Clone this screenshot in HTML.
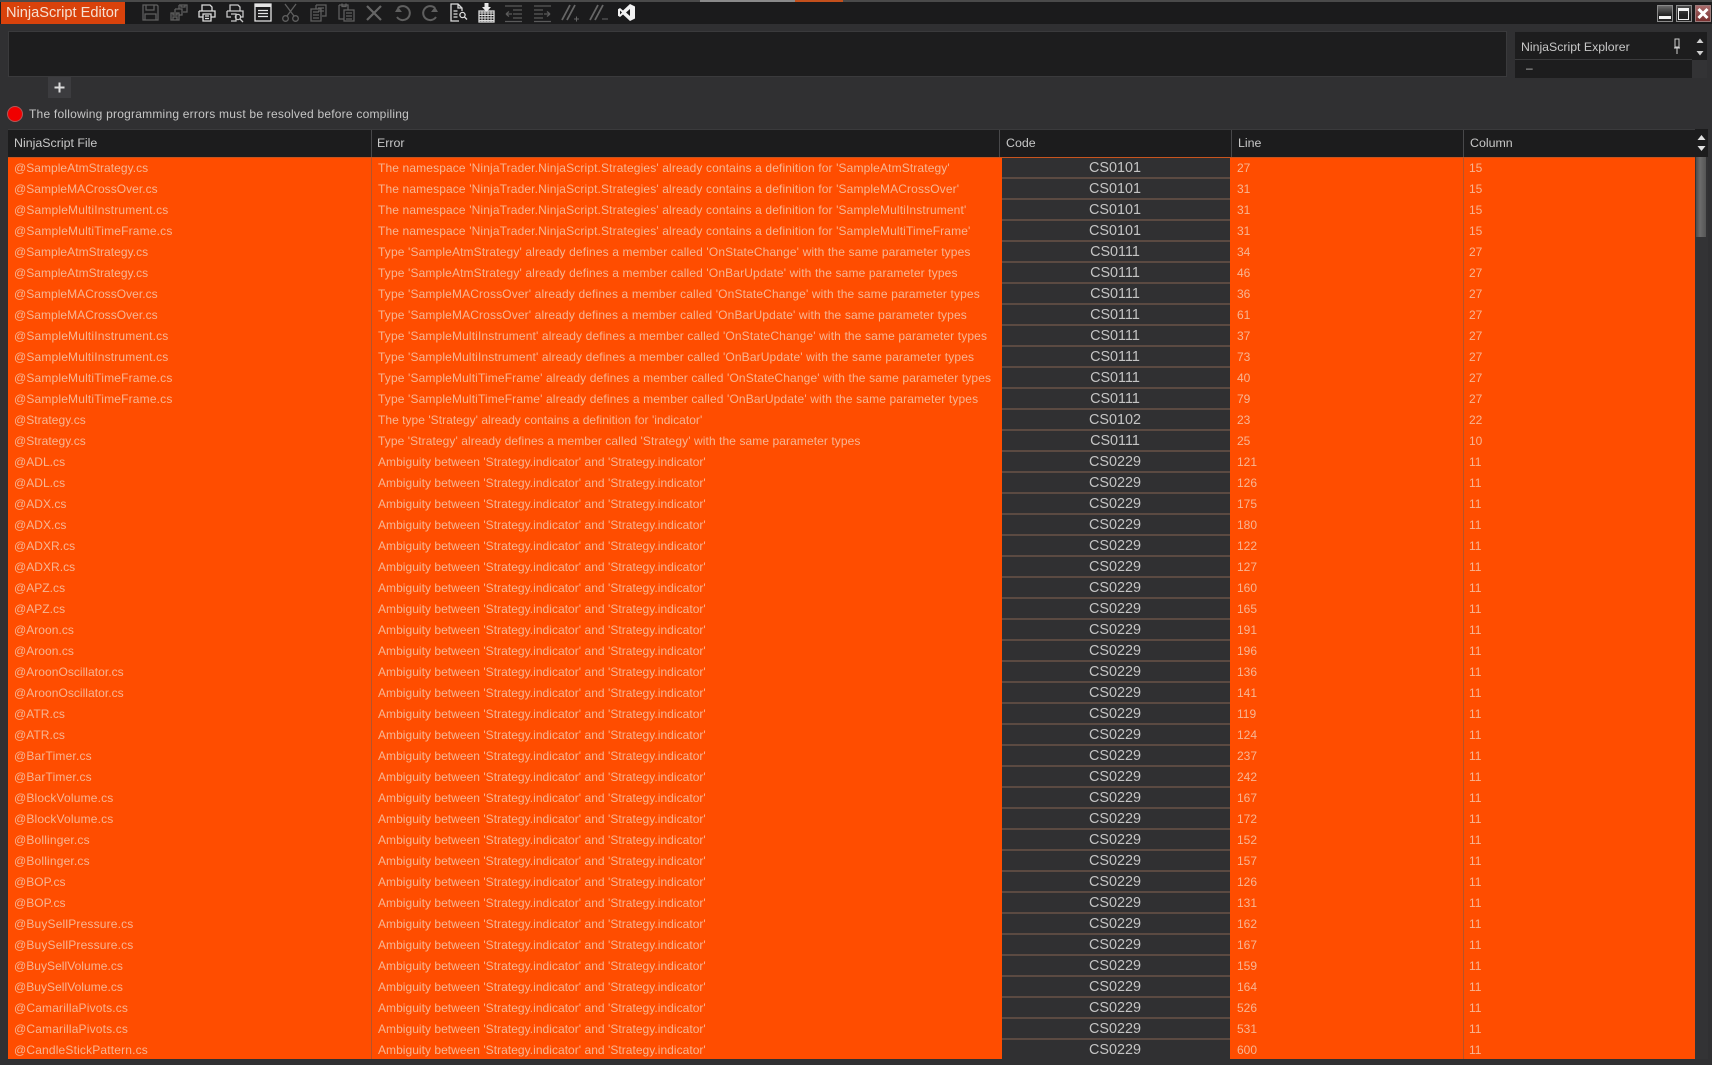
<!DOCTYPE html>
<html>
<head>
<meta charset="utf-8">
<title>NinjaScript Editor</title>
<style>
html,body{margin:0;padding:0;background:#303032;}
body{width:1712px;height:1065px;position:relative;overflow:hidden;font-family:"Liberation Sans",sans-serif;font-size:12px;color:#c8c8c8;}
.abs{position:absolute;}
#topline{left:0;top:0;width:1712px;height:2px;background:#4a4a4a;}
#bar{left:0;top:2px;width:1712px;height:22px;background:#1b1b1c;}
#title{left:1px;top:2px;width:124px;height:22px;background:#d9420b;color:#f6e0d2;font-size:14.6px;line-height:22px;padding-left:5px;box-sizing:border-box;white-space:nowrap;}
#editor{left:8px;top:31px;width:1499px;height:46px;background:#1d1d1e;box-shadow:inset 0 0 0 1px #3a3a3c;}
#plus{left:48px;top:77px;width:23px;height:21px;background:#3c3c3f;color:#d8d8d8;}
#dot{left:7px;top:106px;width:16px;height:16px;border-radius:50%;background:#f00000;box-sizing:border-box;border:1px solid #b05858;}
#msg{left:29px;top:107px;line-height:15px;letter-spacing:.22px;color:#c6c6c6;white-space:nowrap;}
#exp{left:1515px;top:32px;width:177px;height:46px;background:#1d1d1e;}
#exp .hd{position:absolute;left:0;top:0;width:177px;height:28px;border-bottom:1px solid #3a3a3c;box-sizing:border-box;line-height:30px;padding-left:6px;color:#c8c8c8;font-size:12.3px;}
#exp .t{position:absolute;left:11px;top:28px;color:#bbb;line-height:16px;}
#exp .sb{position:absolute;left:177px;top:28px;width:15px;height:18px;background:#333335;}
#exps{left:1692px;top:32px;width:15px;height:28px;background:#1d1d1e;}
#head{left:8px;top:129px;width:1700px;height:28px;background:#1c1c1d;line-height:28px;color:#c8c8c8;border-top:1px solid #3a3a3c;box-sizing:border-box;font-size:12.4px;}
#head span{position:absolute;top:-1px;white-space:nowrap;}
#head i{position:absolute;top:0;width:1px;height:28px;background:#48484a;}
#grid{left:8px;top:157px;width:1687px;height:902px;background:#ff4d00;overflow:hidden;border-top:1px solid #c8541e;box-sizing:border-box;}
.d{position:absolute;top:0;width:1px;height:902px;background:#b5542a;}
.r{position:relative;height:21px;white-space:nowrap;color:#f7b592;line-height:21px;}
.r b{font-weight:normal;position:absolute;top:0;}
.f{left:6px;letter-spacing:.04px;}
.f.s{letter-spacing:.17px;}
.e{left:370px;letter-spacing:.035px;}
.e.n{letter-spacing:.13px;}
.e.t{letter-spacing:.135px;}
.c{left:994px;width:226px;padding-right:2px;height:19px;background:#303032;border-bottom:2px solid #5b4a42;color:#c4c4c4;font-size:14.4px;text-align:center;line-height:21px;}
.l{left:1229px;}
.k{left:1461px;}
#sbar{left:1695px;top:157px;width:13px;height:902px;background:#333335;}
#thumb{left:1696px;top:157px;width:10px;height:80px;background:linear-gradient(90deg,#4c4c4c,#6c6c6c 40%,#555);}
#sb2{left:1695px;top:129px;width:13px;height:28px;background:#1c1c1d;}
svg{position:absolute;overflow:visible;}
</style>
</head>
<body>
<div class="abs" id="topline"></div>
<div class="abs" id="bar"></div>
<div class="abs" style="left:700px;top:0;width:140px;height:2px;background:#8a8a8a"></div>
<div class="abs" style="left:795px;top:0;width:48px;height:2px;background:#c4501c"></div>
<div class="abs" id="title">NinjaScript Editor</div>

<svg style="left:-1px;top:-1px" width="700" height="26" fill="none" stroke-width="1.3">
<!-- save -->
<g stroke="#5f5f5f" transform="translate(143,5)"><path d="M1 1H15L16 2V16H1ZM4 1V6H12V1M3 16V10H14V16"/></g>
<!-- save all -->
<g stroke="#5f5f5f" transform="translate(171,5)"><path d="M9 1H17V8H13M9 1V5M11 1V3H15V1M5 5H12V11H9M5 5V8M1 9H9V16H1ZM3 9V11H7V9M3 16V13H7V16"/></g>
<!-- print -->
<g stroke="#dcdcdc" transform="translate(199,5)"><path d="M4 7V1H12L14 3V7M1 7H17V13H13M5 13H1V7M5 10H13V17H5ZM7 12H11M7 14.5H11"/></g>
<!-- print preview -->
<g stroke="#c8c8c8" transform="translate(227,5)"><path d="M4 7V1H12L14 3V7M1 7H17V13H14M5 13H1V7M5 10H10V17H5"/><circle cx="12" cy="13" r="2.6"/><path d="M14 15L17 18"/></g>
<!-- document list -->
<g transform="translate(255,4)"><path d="M1 1H17V18H1Z" stroke="#e4e4e4"/><rect x="1" y="1" width="16" height="3" fill="#e4e4e4"/><path d="M4 7.5H14M4 10.5H14M4 13.5H14" stroke="#e4e4e4"/></g>
<!-- cut -->
<g stroke="#5f5f5f" transform="translate(283,5)"><path d="M3 0L12 12M14 0L5 12"/><circle cx="3.5" cy="14.5" r="2.8"/><circle cx="13.5" cy="14.5" r="2.8"/></g>
<!-- copy -->
<g stroke="#5f5f5f" transform="translate(311,5)"><path d="M6 1H16V12H12M6 1V5M8 4H14M8 7H14M1 5H11V17H1ZM3 8H9M3 11H9M3 14H9"/></g>
<!-- paste -->
<g stroke="#5f5f5f" transform="translate(339,4)"><path d="M1 2H10V7M1 2V16H6M4 0.5V3.5H8V0.5M6 7H16V18H6ZM8 10H14M8 13H14M8 16H14"/></g>
<!-- delete -->
<g stroke="#666" stroke-width="2.2" transform="translate(367,6)"><path d="M1 1L15 15M15 1L1 15"/></g>
<!-- undo -->
<g stroke="#5f5f5f" stroke-width="2" transform="translate(395,5)"><path d="M4 4A7 7 0 1 1 3 13"/><path d="M1 8H8L4 3Z" fill="#5f5f5f" stroke="none"/></g>
<!-- redo -->
<g stroke="#5f5f5f" stroke-width="2" transform="translate(423,5)"><path d="M13 4A7 7 0 1 0 14 13"/><path d="M16 8H9L13 3Z" fill="#5f5f5f" stroke="none"/></g>
<!-- find doc -->
<g stroke="#dcdcdc" transform="translate(451,5)"><path d="M9 17H1V0H8L12 4V7M8 0V4H12M3.5 7H7.5M3.5 10H7.5M3.5 13H7.5"/><circle cx="12.5" cy="11" r="2.6"/><path d="M14.5 13L17 15.5"/></g>
<!-- insert -->
<g transform="translate(479,4)"><rect x="1" y="8" width="15" height="11" fill="none" stroke="#dcdcdc"/><path d="M1 10H16M1 12.5H16M1 15H16M1 17.5H16M4 8V19M7 8V19M10 8V19M13 8V19" stroke="#dcdcdc" stroke-width="1"/><path d="M6.5 0H10.5V4H13L8.5 9L4 4H6.5Z" fill="#e8e8e8"/></g>
<!-- outdent -->
<g stroke="#5a5a5a" transform="translate(506,6)"><path d="M0 1H17M8 5H17M8 9H17M8 13H17M0 16.5H17M1 9H7M1 9L4 6.5M1 9L4 11.5"/></g>
<!-- indent -->
<g stroke="#5a5a5a" transform="translate(535,6)"><path d="M0 1H17M0 5H9M0 9H9M0 13H9M0 16.5H17M10 9H16M16 9L13 6.5M16 9L13 11.5"/></g>
<!-- comment -->
<g stroke="#666" transform="translate(563,5)"><path d="M0 16L8 1M5 16L13 1" stroke-width="1.8"/><path d="M12 15H17M14.5 12.5V17.5" stroke-width="1"/></g>
<!-- uncomment -->
<g stroke="#666" transform="translate(591,5)"><path d="M0 16L8 1M5 16L13 1" stroke-width="1.8"/><path d="M12 15H18" stroke-width="1"/></g>
<!-- VS -->
<g transform="translate(619,4)"><path d="M12 1L17 3.5V15.5L12 18L5 11.5L2 14L0 12.8V6.2L2 5L5 7.5ZM12 6L8 9.5L12 13ZM2 7.5V11.5L4 9.5Z" fill="#f2f2f2" fill-rule="evenodd"/></g>
</svg>

<!-- window buttons -->
<div class="abs" style="left:1657px;top:5px;width:14px;height:15px;border:1px solid #8a8a8a;background:linear-gradient(#6a6a6a,#222 60%)"><div style="position:absolute;left:1px;top:10px;width:12px;height:3px;background:#f2f2f2"></div></div>
<div class="abs" style="left:1676px;top:5px;width:14px;height:15px;border:1px solid #8a8a8a;background:linear-gradient(#4a4a4a,#222 60%)"><div style="position:absolute;left:1px;top:2px;width:9px;height:8px;border:1.5px solid #f2f2f2;border-top-width:3px"></div></div>
<div class="abs" style="left:1695px;top:5px;width:14px;height:15px;border:1px solid #9a7a7a;background:linear-gradient(#a86a6a,#7a3030)"><svg width="14" height="15" style="left:0;top:0"><path d="M2.500 3L11.500 12M11.500 3L2.500 12" stroke="#fff" stroke-width="3"/></svg></div>

<div class="abs" id="editor"></div>
<div class="abs" id="plus"><svg width="23" height="21" style="left:0;top:0"><path d="M11.5 5.5V15.5M6.5 10.5H16.5" stroke="#dcdcdc" stroke-width="2"/></svg></div>
<div class="abs" id="dot"></div>
<div class="abs" id="msg">The following programming errors must be resolved before compiling</div>

<div class="abs" id="exp">
  <div class="hd">NinjaScript Explorer</div>
  <div class="t">&ndash;</div>
  <div class="sb"></div>
  <svg width="10" height="18" style="left:157px;top:6px"><path d="M3 1H7V9H3ZM2 10H8M5 10V16" fill="none" stroke="#cfcfcf" stroke-width="1"/></svg>
</div>
<div class="abs" id="exps"><svg width="15" height="28" style="left:0;top:0"><path d="M4.500 11L8 6.500L11.500 11ZM4.500 19H11.500L8 23.500Z" fill="#cfcfcf"/></svg></div>

<div class="abs" id="head">
  <span style="left:6px">NinjaScript File</span>
  <i style="left:363px"></i>
  <span style="left:369px">Error</span>
  <i style="left:991px"></i>
  <span style="left:998px">Code</span>
  <i style="left:1223px"></i>
  <span style="left:1230px">Line</span>
  <i style="left:1455px"></i>
  <span style="left:1462px">Column</span>
</div>
<div class="abs" id="sb2"><svg width="13" height="28" style="left:0;top:0"><path d="M2.500 11L6.500 6L10.500 11ZM2.500 17H10.500L6.500 22Z" fill="#e0e0e0"/></svg></div>

<div class="abs" id="grid">
<i class="d" style="left:363px"></i><i class="d" style="left:1455px"></i>
<div class="r"><b class="f">@SampleAtmStrategy.cs</b><b class="e n">The namespace 'NinjaTrader.NinjaScript.Strategies' already contains a definition for 'SampleAtmStrategy'</b><b class="c">CS0101</b><b class="l">27</b><b class="k">15</b></div>
<div class="r"><b class="f">@SampleMACrossOver.cs</b><b class="e n">The namespace 'NinjaTrader.NinjaScript.Strategies' already contains a definition for 'SampleMACrossOver'</b><b class="c">CS0101</b><b class="l">31</b><b class="k">15</b></div>
<div class="r"><b class="f s">@SampleMultiInstrument.cs</b><b class="e n">The namespace 'NinjaTrader.NinjaScript.Strategies' already contains a definition for 'SampleMultiInstrument'</b><b class="c">CS0101</b><b class="l">31</b><b class="k">15</b></div>
<div class="r"><b class="f s">@SampleMultiTimeFrame.cs</b><b class="e n">The namespace 'NinjaTrader.NinjaScript.Strategies' already contains a definition for 'SampleMultiTimeFrame'</b><b class="c">CS0101</b><b class="l">31</b><b class="k">15</b></div>
<div class="r"><b class="f">@SampleAtmStrategy.cs</b><b class="e t">Type 'SampleAtmStrategy' already defines a member called 'OnStateChange' with the same parameter types</b><b class="c">CS0111</b><b class="l">34</b><b class="k">27</b></div>
<div class="r"><b class="f">@SampleAtmStrategy.cs</b><b class="e t">Type 'SampleAtmStrategy' already defines a member called 'OnBarUpdate' with the same parameter types</b><b class="c">CS0111</b><b class="l">46</b><b class="k">27</b></div>
<div class="r"><b class="f">@SampleMACrossOver.cs</b><b class="e t">Type 'SampleMACrossOver' already defines a member called 'OnStateChange' with the same parameter types</b><b class="c">CS0111</b><b class="l">36</b><b class="k">27</b></div>
<div class="r"><b class="f">@SampleMACrossOver.cs</b><b class="e t">Type 'SampleMACrossOver' already defines a member called 'OnBarUpdate' with the same parameter types</b><b class="c">CS0111</b><b class="l">61</b><b class="k">27</b></div>
<div class="r"><b class="f s">@SampleMultiInstrument.cs</b><b class="e t">Type 'SampleMultiInstrument' already defines a member called 'OnStateChange' with the same parameter types</b><b class="c">CS0111</b><b class="l">37</b><b class="k">27</b></div>
<div class="r"><b class="f s">@SampleMultiInstrument.cs</b><b class="e t">Type 'SampleMultiInstrument' already defines a member called 'OnBarUpdate' with the same parameter types</b><b class="c">CS0111</b><b class="l">73</b><b class="k">27</b></div>
<div class="r"><b class="f s">@SampleMultiTimeFrame.cs</b><b class="e t">Type 'SampleMultiTimeFrame' already defines a member called 'OnStateChange' with the same parameter types</b><b class="c">CS0111</b><b class="l">40</b><b class="k">27</b></div>
<div class="r"><b class="f s">@SampleMultiTimeFrame.cs</b><b class="e t">Type 'SampleMultiTimeFrame' already defines a member called 'OnBarUpdate' with the same parameter types</b><b class="c">CS0111</b><b class="l">79</b><b class="k">27</b></div>
<div class="r"><b class="f">@Strategy.cs</b><b class="e">The type 'Strategy' already contains a definition for 'indicator'</b><b class="c">CS0102</b><b class="l">23</b><b class="k">22</b></div>
<div class="r"><b class="f">@Strategy.cs</b><b class="e" style="letter-spacing:.08px">Type 'Strategy' already defines a member called 'Strategy' with the same parameter types</b><b class="c">CS0111</b><b class="l">25</b><b class="k">10</b></div>
<div class="r"><b class="f">@ADL.cs</b><b class="e">Ambiguity between 'Strategy.indicator' and 'Strategy.indicator'</b><b class="c">CS0229</b><b class="l">121</b><b class="k">11</b></div>
<div class="r"><b class="f">@ADL.cs</b><b class="e">Ambiguity between 'Strategy.indicator' and 'Strategy.indicator'</b><b class="c">CS0229</b><b class="l">126</b><b class="k">11</b></div>
<div class="r"><b class="f">@ADX.cs</b><b class="e">Ambiguity between 'Strategy.indicator' and 'Strategy.indicator'</b><b class="c">CS0229</b><b class="l">175</b><b class="k">11</b></div>
<div class="r"><b class="f">@ADX.cs</b><b class="e">Ambiguity between 'Strategy.indicator' and 'Strategy.indicator'</b><b class="c">CS0229</b><b class="l">180</b><b class="k">11</b></div>
<div class="r"><b class="f">@ADXR.cs</b><b class="e">Ambiguity between 'Strategy.indicator' and 'Strategy.indicator'</b><b class="c">CS0229</b><b class="l">122</b><b class="k">11</b></div>
<div class="r"><b class="f">@ADXR.cs</b><b class="e">Ambiguity between 'Strategy.indicator' and 'Strategy.indicator'</b><b class="c">CS0229</b><b class="l">127</b><b class="k">11</b></div>
<div class="r"><b class="f">@APZ.cs</b><b class="e">Ambiguity between 'Strategy.indicator' and 'Strategy.indicator'</b><b class="c">CS0229</b><b class="l">160</b><b class="k">11</b></div>
<div class="r"><b class="f">@APZ.cs</b><b class="e">Ambiguity between 'Strategy.indicator' and 'Strategy.indicator'</b><b class="c">CS0229</b><b class="l">165</b><b class="k">11</b></div>
<div class="r"><b class="f">@Aroon.cs</b><b class="e">Ambiguity between 'Strategy.indicator' and 'Strategy.indicator'</b><b class="c">CS0229</b><b class="l">191</b><b class="k">11</b></div>
<div class="r"><b class="f">@Aroon.cs</b><b class="e">Ambiguity between 'Strategy.indicator' and 'Strategy.indicator'</b><b class="c">CS0229</b><b class="l">196</b><b class="k">11</b></div>
<div class="r"><b class="f">@AroonOscillator.cs</b><b class="e">Ambiguity between 'Strategy.indicator' and 'Strategy.indicator'</b><b class="c">CS0229</b><b class="l">136</b><b class="k">11</b></div>
<div class="r"><b class="f">@AroonOscillator.cs</b><b class="e">Ambiguity between 'Strategy.indicator' and 'Strategy.indicator'</b><b class="c">CS0229</b><b class="l">141</b><b class="k">11</b></div>
<div class="r"><b class="f">@ATR.cs</b><b class="e">Ambiguity between 'Strategy.indicator' and 'Strategy.indicator'</b><b class="c">CS0229</b><b class="l">119</b><b class="k">11</b></div>
<div class="r"><b class="f">@ATR.cs</b><b class="e">Ambiguity between 'Strategy.indicator' and 'Strategy.indicator'</b><b class="c">CS0229</b><b class="l">124</b><b class="k">11</b></div>
<div class="r"><b class="f s">@BarTimer.cs</b><b class="e">Ambiguity between 'Strategy.indicator' and 'Strategy.indicator'</b><b class="c">CS0229</b><b class="l">237</b><b class="k">11</b></div>
<div class="r"><b class="f s">@BarTimer.cs</b><b class="e">Ambiguity between 'Strategy.indicator' and 'Strategy.indicator'</b><b class="c">CS0229</b><b class="l">242</b><b class="k">11</b></div>
<div class="r"><b class="f s">@BlockVolume.cs</b><b class="e">Ambiguity between 'Strategy.indicator' and 'Strategy.indicator'</b><b class="c">CS0229</b><b class="l">167</b><b class="k">11</b></div>
<div class="r"><b class="f s">@BlockVolume.cs</b><b class="e">Ambiguity between 'Strategy.indicator' and 'Strategy.indicator'</b><b class="c">CS0229</b><b class="l">172</b><b class="k">11</b></div>
<div class="r"><b class="f s">@Bollinger.cs</b><b class="e">Ambiguity between 'Strategy.indicator' and 'Strategy.indicator'</b><b class="c">CS0229</b><b class="l">152</b><b class="k">11</b></div>
<div class="r"><b class="f s">@Bollinger.cs</b><b class="e">Ambiguity between 'Strategy.indicator' and 'Strategy.indicator'</b><b class="c">CS0229</b><b class="l">157</b><b class="k">11</b></div>
<div class="r"><b class="f">@BOP.cs</b><b class="e">Ambiguity between 'Strategy.indicator' and 'Strategy.indicator'</b><b class="c">CS0229</b><b class="l">126</b><b class="k">11</b></div>
<div class="r"><b class="f">@BOP.cs</b><b class="e">Ambiguity between 'Strategy.indicator' and 'Strategy.indicator'</b><b class="c">CS0229</b><b class="l">131</b><b class="k">11</b></div>
<div class="r"><b class="f s">@BuySellPressure.cs</b><b class="e">Ambiguity between 'Strategy.indicator' and 'Strategy.indicator'</b><b class="c">CS0229</b><b class="l">162</b><b class="k">11</b></div>
<div class="r"><b class="f s">@BuySellPressure.cs</b><b class="e">Ambiguity between 'Strategy.indicator' and 'Strategy.indicator'</b><b class="c">CS0229</b><b class="l">167</b><b class="k">11</b></div>
<div class="r"><b class="f">@BuySellVolume.cs</b><b class="e">Ambiguity between 'Strategy.indicator' and 'Strategy.indicator'</b><b class="c">CS0229</b><b class="l">159</b><b class="k">11</b></div>
<div class="r"><b class="f">@BuySellVolume.cs</b><b class="e">Ambiguity between 'Strategy.indicator' and 'Strategy.indicator'</b><b class="c">CS0229</b><b class="l">164</b><b class="k">11</b></div>
<div class="r"><b class="f s">@CamarillaPivots.cs</b><b class="e">Ambiguity between 'Strategy.indicator' and 'Strategy.indicator'</b><b class="c">CS0229</b><b class="l">526</b><b class="k">11</b></div>
<div class="r"><b class="f s">@CamarillaPivots.cs</b><b class="e">Ambiguity between 'Strategy.indicator' and 'Strategy.indicator'</b><b class="c">CS0229</b><b class="l">531</b><b class="k">11</b></div>
<div class="r"><b class="f s">@CandleStickPattern.cs</b><b class="e">Ambiguity between 'Strategy.indicator' and 'Strategy.indicator'</b><b class="c">CS0229</b><b class="l">600</b><b class="k">11</b></div>
</div>
<div class="abs" id="sbar"></div>
<div class="abs" id="thumb"></div>
</body>
</html>
